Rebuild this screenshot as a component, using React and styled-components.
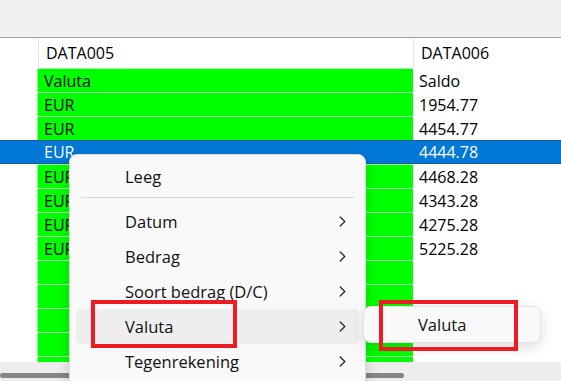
import React from "react";
import styled, { createGlobalStyle } from "styled-components";

const GlobalStyle = createGlobalStyle`
  html, body { margin: 0; padding: 0; background: #ffffff; }
  body { font-family: "Segoe UI", "Open Sans", "Noto Sans", sans-serif; }
  * { box-sizing: border-box; }
`;

const Page = styled.div`
  position: relative;
  width: 561px;
  height: 381px;
  overflow: hidden;
  background: #ffffff;
  display: flex;
  flex-direction: column;
  font-size: 16px;
  color: #000;
`;

const TopBar = styled.div`
  height: 38px;
  flex: none;
  background: #f0f0f0;
  border-bottom: 1px solid #a0a0a0;
`;

const HeaderRow = styled.div`
  display: flex;
  height: 30px;
  flex: none;
`;

const Gutter = styled.div`
  width: 38px;
  flex: none;
`;

const HeaderCell = styled.div`
  width: ${(p) => (p.$width ? `${p.$width}px` : "auto")};
  flex: ${(p) => (p.$width ? "none" : "1")};
  border-left: 1px solid #e3e3e3;
  padding-left: 7px;
  display: flex;
  align-items: center;
  white-space: nowrap;
`;

const Body = styled.div`
  height: 294px;
  flex: none;
  overflow: hidden;
`;

const Row = styled.div`
  display: flex;
  height: 24px;
  background: ${(p) => (p.$selected ? "#0078d7" : "transparent")};
  color: ${(p) => (p.$selected ? "#ffffff" : "#000000")};
  border-top: 1px ${(p) => (p.$selected ? "dotted #1d3a5c" : "solid transparent")};
  border-bottom: ${(p) => (p.$selected ? "1px dotted #1d3a5c" : "0")};
`;

const Cell = styled.div`
  width: ${(p) => (p.$width ? `${p.$width}px` : "auto")};
  flex: ${(p) => (p.$width ? "none" : "1")};
  background: ${(p) => (p.$green && !p.$selected ? "#00ff00" : "transparent")};
  box-shadow: ${(p) => (p.$green && !p.$selected ? "0 -1px 0 #a8ffa8, -1px 0 0 #80ff80" : "none")};
  padding-left: 6px;
  display: flex;
  align-items: center;
  white-space: nowrap;
  overflow: hidden;
`;

const ScrollTrack = styled.div`
  flex: 1;
  background: #ededed;
  display: flex;
  align-items: flex-end;
  padding-bottom: 3px;
`;

const Thumb = styled.div`
  width: 404px;
  height: 5px;
  border-radius: 3px;
  background: #858585;
`;

const Menu = styled.div`
  position: absolute;
  left: 69px;
  top: 154px;
  width: 297px;
  height: 250px;
  background: #f9f9f9;
  border: 1px solid #dcdcdc;
  border-radius: 8px;
  box-shadow: 0 4px 14px rgba(0, 0, 0, 0.16);
  padding: 4px 6px;
  display: flex;
  flex-direction: column;
`;

const MenuItem = styled.div`
  height: 35px;
  flex: none;
  display: flex;
  align-items: center;
  padding: 0 13px 0 49px;
  border-radius: 5px;
  background: ${(p) => (p.$hover ? "#eeeeee" : "transparent")};
  color: #111;
  font-size: 16.5px;
`;

const Label = styled.span`
  flex: 1;
  white-space: nowrap;
`;

const Separator = styled.div`
  height: 1px;
  flex: none;
  background: #d8d8d8;
  margin: 3px 5px 6px 5px;
`;

const SubMenu = styled.div`
  position: absolute;
  left: 363px;
  top: 306px;
  width: 178px;
  height: 37px;
  background: #f9f9f9;
  border: 1px solid #e2e2e2;
  border-radius: 8px;
  box-shadow: 0 4px 14px rgba(0, 0, 0, 0.14);
  display: flex;
  align-items: center;
  padding-left: 54px;
  font-size: 16.5px;
  color: #111;
`;

const Highlight = styled.div`
  position: absolute;
  left: ${(p) => p.$x}px;
  top: ${(p) => p.$y}px;
  width: ${(p) => p.$w}px;
  height: ${(p) => p.$h}px;
  border: 4px solid #ed1c24;
`;

const Chevron = () => (
  <svg width="7" height="11" viewBox="0 0 7 11" fill="none">
    <path d="M1.2 1 L5.8 5.5 L1.2 10" stroke="#222" strokeWidth="1.2" strokeLinecap="round" strokeLinejoin="round" />
  </svg>
);

const rows = [
  ["Valuta", "Saldo"],
  ["EUR", "1954.77"],
  ["EUR", "4454.77"],
  ["EUR", "4444.78", true],
  ["EUR", "4468.28"],
  ["EUR", "4343.28"],
  ["EUR", "4275.28"],
  ["EUR", "5225.28"],
  ["", ""],
  ["", ""],
  ["", ""],
  ["", ""],
  ["", ""],
];

const items = [
  { label: "Datum" },
  { label: "Bedrag" },
  { label: "Soort bedrag (D/C)" },
  { label: "Valuta", hover: true },
  { label: "Tegenrekening" },
];

export default function App() {
  return (
    <>
      <GlobalStyle />
      <Page>
        <TopBar />
        <HeaderRow>
          <Gutter />
          <HeaderCell $width={375}>DATA005</HeaderCell>
          <HeaderCell>DATA006</HeaderCell>
        </HeaderRow>
        <Body>
          {rows.map(([a, b, sel], i) => (
            <Row key={i} $selected={sel}>
              <Gutter />
              <Cell $width={375} $green $selected={sel}>{a}</Cell>
              <Cell>{b}</Cell>
            </Row>
          ))}
        </Body>
        <ScrollTrack>
          <Thumb />
        </ScrollTrack>

        <Menu>
          <MenuItem>
            <Label>Leeg</Label>
          </MenuItem>
          <Separator />
          {items.map((it) => (
            <MenuItem key={it.label} $hover={it.hover}>
              <Label>{it.label}</Label>
              <Chevron />
            </MenuItem>
          ))}
        </Menu>
        <SubMenu>Valuta</SubMenu>

        <Highlight $x={91} $y={300} $w={146} $h={48} />
        <Highlight $x={379} $y={300} $w={139} $h={51} />
      </Page>
    </>
  );
}
